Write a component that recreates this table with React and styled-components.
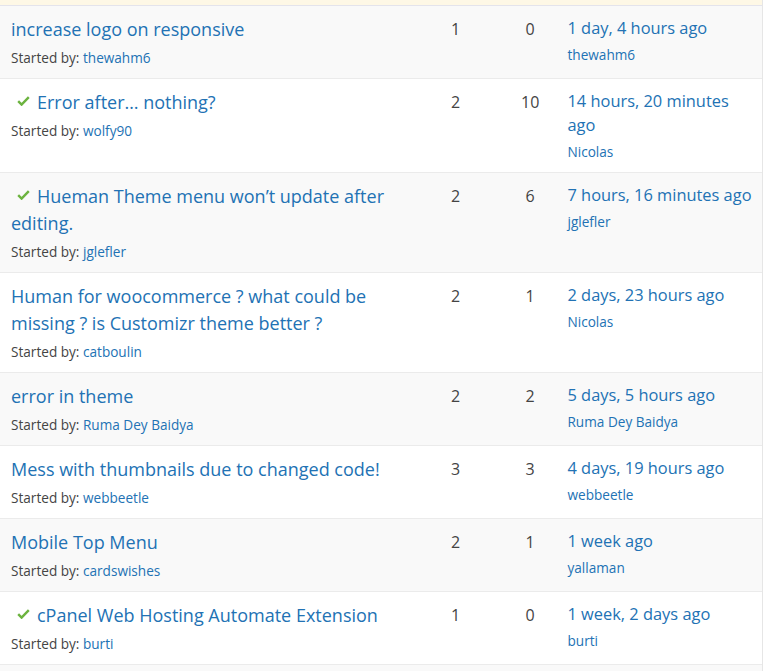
import React from "react";
import styled, { createGlobalStyle } from "styled-components";

const Global = createGlobalStyle`
  html, body { margin: 0; padding: 0; background: #fff; }
  body { font-family: "Open Sans", "Noto Sans", sans-serif; color: #444; }
`;

const Page = styled.div`
  width: 763px;
  box-sizing: border-box;
  border-right: 1px solid #e6e6e6;
`;

const Notice = styled.div`
  height: 5px;
  background: #fef8e6;
`;

const List = styled.ul`
  list-style: none;
  margin: 0;
  padding: 0;
`;

const Row = styled.li`
  display: flex;
  align-items: flex-start;
  padding: 10px 8px;
  border-top: 1px solid ${(p) => (p.$first ? "#e4e4ec" : "#ebebeb")};
  background: ${(p) => (p.$alt ? "#f9f9f9" : "#fff")};
`;

const TitleCell = styled.div`
  width: 55%;
  box-sizing: border-box;
  padding-left: 3px;
  padding-right: 8px;
`;

const TopicLink = styled.a`
  display: block;
  font-size: 18px;
  line-height: 27px;
  color: #2272b4;
  text-decoration: none;
`;

const Check = styled.svg`
  display: inline-block;
  width: 13px;
  height: 10px;
  margin: 0 7px 0 6px;
  vertical-align: 3px;
`;

const Meta = styled.div`
  margin-top: 5px;
  font-size: 13.6px;
  line-height: 20px;
  color: #444;
`;

const User = styled.a`
  color: #2272b4;
  text-decoration: none;
`;

const Count = styled.div`
  width: 10%;
  text-align: center;
  font-size: 16px;
  line-height: 24px;
  padding-top: 1px;
  color: #444;
`;

const Fresh = styled.div`
  width: 25%;
`;

const Time = styled.a`
  display: block;
  font-size: 16.4px;
  line-height: 24px;
  color: #2272b4;
  text-decoration: none;
`;

const Author = styled.a`
  display: block;
  margin-top: 5px;
  font-size: 13.6px;
  line-height: 20px;
  color: #2272b4;
  text-decoration: none;
`;

const Footer = styled.div`
  height: 20px;
  border-top: 1px solid #ebebeb;
  background: #f9f9f9;
`;

const topics = [
  { title: "increase logo on responsive", by: "thewahm6", voices: 1, replies: 0, time: "1 day, 4 hours ago", last: "thewahm6" },
  { title: "Error after… nothing?", resolved: true, by: "wolfy90", voices: 2, replies: 10, time: "14 hours, 20 minutes ago", last: "Nicolas" },
  { title: "Hueman Theme menu won’t update after editing.", resolved: true, by: "jglefler", voices: 2, replies: 6, time: "7 hours, 16 minutes ago", last: "jglefler" },
  { title: "Human for woocommerce ? what could be missing ? is Customizr theme better ?", by: "catboulin", voices: 2, replies: 1, time: "2 days, 23 hours ago", last: "Nicolas" },
  { title: "error in theme", by: "Ruma Dey Baidya", voices: 2, replies: 2, time: "5 days, 5 hours ago", last: "Ruma Dey Baidya" },
  { title: "Mess with thumbnails due to changed code!", by: "webbeetle", voices: 3, replies: 3, time: "4 days, 19 hours ago", last: "webbeetle" },
  { title: "Mobile Top Menu", by: "cardswishes", voices: 2, replies: 1, time: "1 week ago", last: "yallaman" },
  { title: "cPanel Web Hosting Automate Extension", resolved: true, by: "burti", voices: 1, replies: 0, time: "1 week, 2 days ago", last: "burti" },
];

function CheckIcon() {
  return (
    <Check viewBox="0 0 13 10" aria-hidden="true">
      <path d="M1.2 5.2 L4.6 8.6 L11.8 1.2" fill="none" stroke="#6cb33f" strokeWidth="2.4" strokeLinecap="butt" strokeLinejoin="miter" />
    </Check>
  );
}

export default function App() {
  return (
    <Page>
      <Global />
      <Notice />
      <List>
        {topics.map((t, i) => (
          <Row key={i} $alt={i % 2 === 0} $first={i === 0}>
            <TitleCell>
              <TopicLink href="#">
                {t.resolved && <CheckIcon />}
                {t.title}
              </TopicLink>
              <Meta>
                Started by: <User href="#">{t.by}</User>
              </Meta>
            </TitleCell>
            <Count>{t.voices}</Count>
            <Count>{t.replies}</Count>
            <Fresh>
              <Time href="#">{t.time}</Time>
              <Author href="#">{t.last}</Author>
            </Fresh>
          </Row>
        ))}
      </List>
      <Footer />
    </Page>
  );
}
